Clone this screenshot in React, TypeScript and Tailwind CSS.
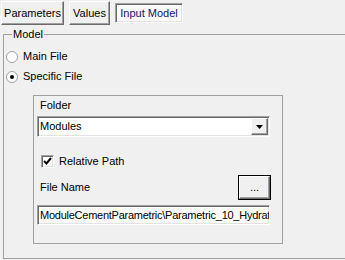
const raised =
  "border-t border-l border-t-white border-l-white border-r border-b border-r-[#696969] border-b-[#696969] shadow-[inset_-1px_-1px_0_#a0a0a0]";
const sunken =
  "border-t border-l border-t-[#a0a0a0] border-l-[#a0a0a0] border-r border-b border-r-white border-b-white shadow-[inset_1px_1px_0_#696969,inset_-1px_-1px_0_#e3e3e3]";

const Radio = ({ checked, label }: { checked?: boolean; label: string }) => (
  <div className="flex items-center h-[13px]">
    <div className="ml-[2px] w-[12px] h-[12px] rounded-full border border-[#a0a0a0] bg-white flex items-center justify-center">
      {checked ? <div className="w-[4px] h-[4px] rounded-full bg-black" /> : null}
    </div>
    <span className="ml-[5px] leading-[13px]">{label}</span>
  </div>
);

export default function App() {
  return (
    <div
      className="w-[345px] h-[260px] overflow-hidden bg-[#f0f0f0] text-[11px] leading-[13px] text-black"
      style={{ fontFamily: '"Liberation Sans", Arial, sans-serif' }}
    >
      {/* tab buttons */}
      <div className="flex items-start pt-[1px] pl-[1px]">
        <button className={`w-[63px] h-[24px] bg-[#f0f0f0] ${raised}`}>Parameters</button>
        <button className={`ml-[5px] w-[41px] h-[24px] bg-[#f0f0f0] ${raised}`}>Values</button>
        <button
          className={`ml-[5px] mt-[2px] w-[68px] h-[20px] bg-[#fafafa] text-[#10107a] ${sunken}`}
        >
          Input Model
        </button>
      </div>

      {/* Model group */}
      <div className="relative ml-[3px] mt-[9px] w-[400px] h-[225px] border border-[#a0a0a0]">
        <span className="absolute left-[8px] -top-[7px] px-[1px] bg-[#f0f0f0]">Model</span>

        <div className="flex flex-col">
          <div className="mt-[15px]">
            <Radio label="Main File" />
          </div>
          <div className="mt-[7px]">
            <Radio checked label="Specific File" />
          </div>

          <div className="ml-[29px] mt-[12px] w-[250px] h-[149px] border border-[#a0a0a0] flex flex-col">
            <div className="mt-[3px] pl-[6px]">Folder</div>

            {/* combobox */}
            <div className={`ml-[3px] mt-[4px] w-[233px] h-[21px] bg-white flex items-center ${sunken}`}>
              <span className="pl-[2px] flex-1">Modules</span>
              <div className={`w-[17px] h-[17px] mr-[1px] bg-[#f0f0f0] flex items-center justify-center ${raised}`}>
                <svg width="7" height="4" viewBox="0 0 7 4">
                  <path d="M0 0h7L3.5 4z" fill="#000" />
                </svg>
              </div>
            </div>

            {/* checkbox */}
            <div className="mt-[18px] ml-[7px] flex items-center h-[13px]">
              <div className={`w-[13px] h-[13px] bg-white flex items-center justify-center ${sunken}`}>
                <svg width="9" height="9" viewBox="0 0 9 9">
                  <path d="M1 4l2.5 2.5L8 1" stroke="#000" strokeWidth="2" fill="none" />
                </svg>
              </div>
              <span className="ml-[5px]">Relative Path</span>
            </div>

            {/* file name */}
            <div className="mt-[7px] flex items-center pl-[6px] pr-[11px]">
              <span className="flex-1">File Name</span>
              <button className="w-[33px] h-[25px] border border-black bg-[#f0f0f0]">
                <div className={`w-full h-full flex items-center justify-center ${raised}`}>...</div>
              </button>
            </div>

            <div className={`ml-[3px] mt-[5px] w-[233px] h-[20px] bg-white overflow-hidden whitespace-nowrap flex items-center ${sunken}`}>
              <span className="pl-[2px] tracking-[-0.25px]">ModuleCementParametric\Parametric_10_Hydrat</span>
            </div>
          </div>
        </div>
      </div>
    </div>
  );
}
